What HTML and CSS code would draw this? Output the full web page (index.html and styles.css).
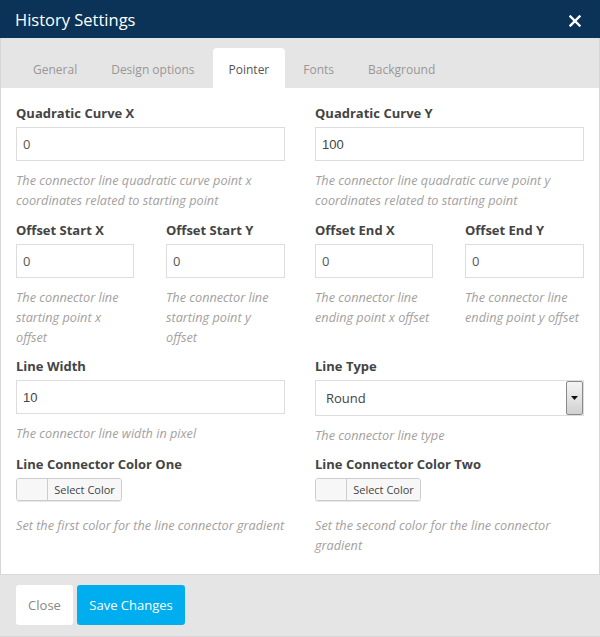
FILE: index.html
```html
<!DOCTYPE html>
<html>
<head>
<meta charset="utf-8">
<link rel="stylesheet" href="styles.css">
</head>
<body>
<div class="modal">
  <div class="modal-header">
    <h1 class="modal-title">History Settings</h1>
    <span class="modal-close">
      <svg width="12" height="12" viewBox="0 0 12 12"><path d="M1.5 1.5 L10.5 10.5 M10.5 1.5 L1.5 10.5" stroke="#fff" stroke-width="2.4" stroke-linecap="square"/></svg>
    </span>
  </div>
  <div class="tabs">
    <span class="tab">General</span>
    <span class="tab">Design options</span>
    <span class="tab active">Pointer</span>
    <span class="tab">Fonts</span>
    <span class="tab">Background</span>
  </div>
  <div class="modal-body">
    <div class="row">
      <div class="group">
        <div class="label">Quadratic Curve X</div>
        <div class="input">0</div>
        <div class="help">The connector line quadratic curve point x coordinates related to starting point</div>
      </div>
      <div class="group">
        <div class="label">Quadratic Curve Y</div>
        <div class="input num">100</div>
        <div class="help">The connector line quadratic curve point y coordinates related to starting point</div>
      </div>
    </div>
    <div class="row">
      <div class="row inner">
        <div class="group">
          <div class="label">Offset Start X</div>
          <div class="input">0</div>
          <div class="help">The connector line starting point x offset</div>
        </div>
        <div class="group">
          <div class="label">Offset Start Y</div>
          <div class="input">0</div>
          <div class="help">The connector line starting point y offset</div>
        </div>
      </div>
      <div class="row inner">
        <div class="group">
          <div class="label">Offset End X</div>
          <div class="input">0</div>
          <div class="help">The connector line ending point x offset</div>
        </div>
        <div class="group">
          <div class="label">Offset End Y</div>
          <div class="input">0</div>
          <div class="help">The connector line ending point y offset</div>
        </div>
      </div>
    </div>
    <div class="row">
      <div class="group">
        <div class="label">Line Width</div>
        <div class="input num">10</div>
        <div class="help">The connector line width in pixel</div>
      </div>
      <div class="group">
        <div class="label">Line Type</div>
        <div class="select">
          <span class="select-value">Round</span>
          <span class="select-arrow">
            <svg width="7" height="4" viewBox="0 0 7 4"><path d="M0 0 H7 L3.5 4 Z" fill="#111"/></svg>
          </span>
        </div>
        <div class="help">The connector line type</div>
      </div>
    </div>
    <div class="row last">
      <div class="group">
        <div class="label">Line Connector Color One</div>
        <div class="color-btn"><span class="swatch"></span><span class="color-text">Select Color</span></div>
        <div class="help help-color">Set the first color for the line connector gradient</div>
      </div>
      <div class="group">
        <div class="label">Line Connector Color Two</div>
        <div class="color-btn"><span class="swatch"></span><span class="color-text">Select Color</span></div>
        <div class="help help-color">Set the second color for the line connector gradient</div>
      </div>
    </div>
  </div>
  <div class="modal-footer">
    <span class="btn btn-close">Close</span>
    <span class="btn btn-save">Save Changes</span>
  </div>
</div>
</body>
</html>
```

FILE: styles.css
```css
* { box-sizing: border-box; }
html, body { margin: 0; padding: 0; background: #fff; }
body { font-family: "Open Sans", "Liberation Sans", sans-serif; color: #333; }

.modal {
  width: 600px;
  height: 637px;
  border: 1px solid #d6d6d6;
  border-top: 0;
  display: flex;
  flex-direction: column;
  background: #fff;
}

.modal-header {
  height: 38px;
  background: #0b3357;
  display: flex;
  align-items: center;
  justify-content: space-between;
  padding: 0 19px 0 15px;
  margin: 0 -1px;
}
.modal-title {
  margin: 0;
  font-size: 16.5px;
  font-weight: 400;
  color: #fff;
  line-height: 38px;
  padding-top: 1px;
}
.modal-close { display: flex; margin-top: 3px; }

.tabs {
  height: 50px;
  background: #e5e5e5;
  display: flex;
  align-items: flex-end;
  padding-left: 16px;
  gap: 2px;
}
.tab {
  height: 40px;
  padding: 0 16px;
  line-height: 43px;
  font-size: 12px;
  color: #9a9696;
  border-radius: 4px 4px 0 0;
}
.tab.active { background: #fff; color: #555; }

.modal-body {
  flex: 1;
  padding: 16px 15px 0;
}
.row {
  display: grid;
  grid-template-columns: 1fr 1fr;
  column-gap: 30px;
  margin-bottom: 10px;
}
.row:first-child { margin-bottom: 11px; }
.row.inner {
  margin-bottom: 0;
  grid-template-columns: 118px 119px;
  justify-content: space-between;
  column-gap: 0;
}
.label {
  font-size: 13px;
  font-weight: 700;
  color: #444;
  line-height: 18px;
  margin-bottom: 5px;
}
.input {
  height: 34px;
  border: 1px solid #ddd;
  padding: 0 6px;
  font-size: 13px;
  line-height: 33px;
  color: #555;
}
.input.num { font-family: "Liberation Sans", Arial, sans-serif; color: #444; }
.help {
  margin-top: 9px;
  font-size: 12.7px;
  font-style: italic;
  line-height: 20px;
  color: #a3a0a0;
}
.select {
  height: 36px;
  border: 1px solid #ddd;
  display: flex;
  align-items: stretch;
  justify-content: space-between;
}
.select-value {
  padding-left: 10px;
  font-size: 13px;
  line-height: 35px;
  color: #444;
}
.select-arrow {
  width: 17px;
  border: 1px solid #8a8a8a;
  border-radius: 2px;
  background: linear-gradient(#f4f4f4, #e4e4e4 50%, #d0d0d0);
  display: flex;
  align-items: center;
  justify-content: center;
}
.color-btn {
  width: 106px;
  height: 23px;
  border: 1px solid #ccc;
  border-radius: 3px;
  display: flex;
  box-shadow: 0 1px 0 #e6e6e6;
  overflow: hidden;
}
.swatch {
  width: 31px;
  background: #f7f7f7;
  border-right: 1px solid #ccc;
}
.color-text {
  flex: 1;
  font-size: 11px;
  line-height: 21px;
  text-align: center;
  color: #444;
  background: #f7f7f7;
}
.help-color { margin-top: 14px; }

.modal-footer {
  height: 62px;
  background: #e5e5e5;
  border-top: 1px solid #dadada;
  margin: 0 -1px;
  padding: 10px 16px 0;
  display: flex;
  align-items: flex-start;
  gap: 4px;
}
.btn {
  height: 40px;
  line-height: 40px;
  border-radius: 3px;
  font-size: 13px;
  text-align: center;
}
.btn-close { width: 57px; background: #fff; color: #888; }
.btn-save { width: 108px; background: #00aeef; color: #fff; }
```
